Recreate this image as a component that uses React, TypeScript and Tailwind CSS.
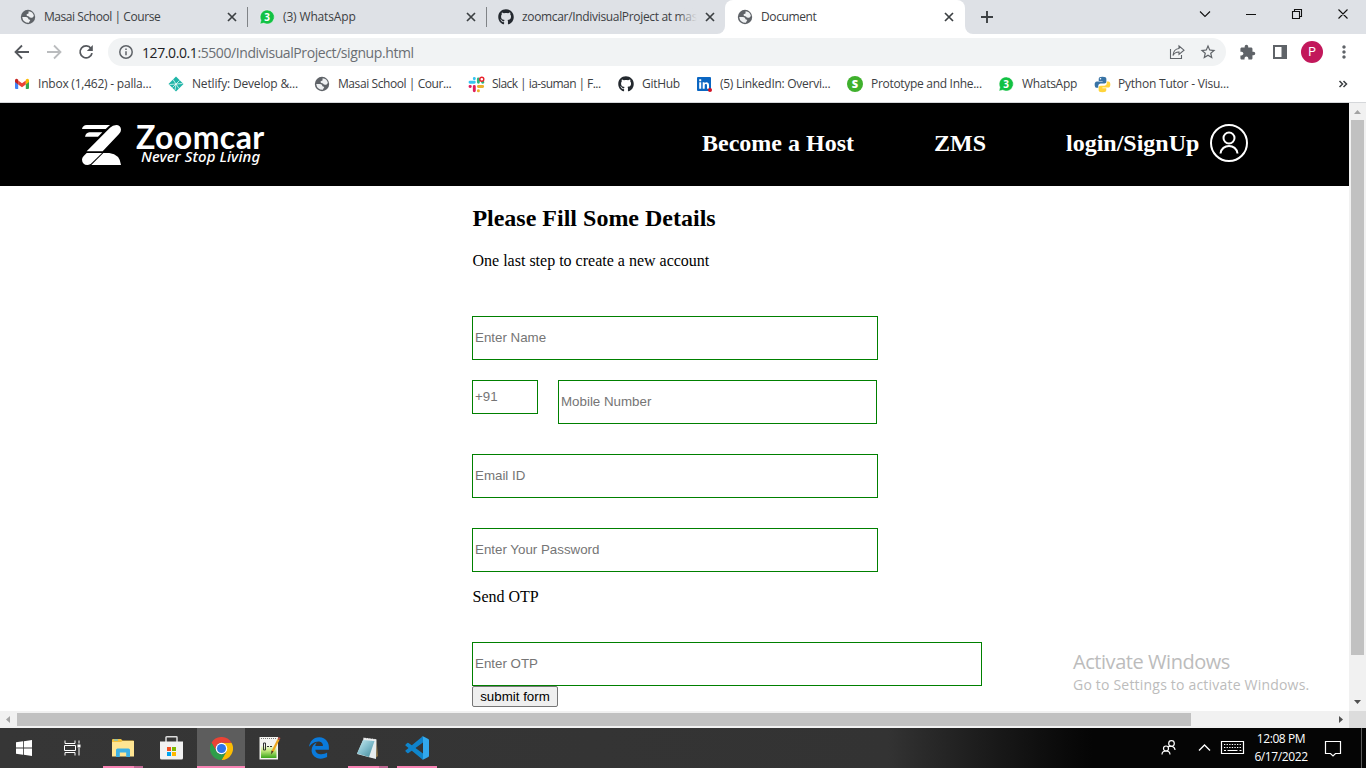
import React from "react";
import { FaGithub } from "react-icons/fa";
import { MdExtension, MdStarBorder, MdMoreVert } from "react-icons/md";

type Kids = { children?: React.ReactNode };

const Globe = () => (
  <svg viewBox="0 0 16 16" className="size-4 shrink-0">
    <circle cx="8" cy="8" r="7.200" fill="#5f6368" />
    <path d="M8.600 2.300q4.300.300 5.300 4.800L12.300 8.700Q9.500 9 9 7.400L6.800 6.800 6.600 5.200 8.500 4.400Z" fill="#eef0f2" />
    <path d="M2.200 8H6.200Q8.500 8.300 8.500 10.200L10.300 11 8.800 13.800Q3 13.800 2.200 8Z" fill="#eef0f2" />
  </svg>
);

const WhatsApp = () => (
  <svg viewBox="0 0 16 16" className="size-4 shrink-0">
    <path d="M8.2 1a7 7 0 1 1-3.4 13.1L1 15l1-3.7A7 7 0 0 1 8.2 1Z" fill="#12c143" stroke="#fff" strokeOpacity=".7" strokeWidth=".6" />
    <text x="8.2" y="11.6" textAnchor="middle" fontSize="10" fontWeight="700" fill="#fff" fontFamily="Open Sans, sans-serif">3</text>
  </svg>
);

const Gmail = () => (
  <svg viewBox="0 0 16 16" className="size-4">
    <path d="M1 4v8q0 1 1 1h2.2V6.5Z" fill="#4285f4" />
    <path d="M15 4v8q0 1-1 1h-2.2V6.5Z" fill="#34a853" />
    <path d="M4.2 4.5v4L8 11.3l3.8-2.8v-4L8 7.3Z" fill="#ea4335" />
    <path d="M1 4.2Q1.3 2 3.3 3l.9.7v4.8L1 6Z" fill="#c5221f" />
    <path d="M15 4.2Q14.7 2 12.7 3l-.9.7v4.8L15 6Z" fill="#fbbc04" />
  </svg>
);

const Netlify = () => (
  <svg viewBox="0 0 16 16" className="size-4">
    <path d="M8 .5 15.5 8 8 15.5.5 8Z" fill="#20b5a8" />
    <path d="m5 3.500 6 9M1.500 8.500l13-1M4.500 11.500l7-7M8 8l-1 6" stroke="#fff" strokeWidth=".7" fill="none" />
  </svg>
);

const Slack = () => (
  <svg viewBox="0 0 17 17" className="size-[17px]" fill="none" strokeWidth="2.9" strokeLinecap="round">
    <path d="M2 6.300h4.300M6.300 2.500v.3" stroke="#36c5f0" />
    <path d="M10.400 3v3.300M14.600 6.300h.3" stroke="#2eb67d" />
    <path d="M10.400 10.500h4.300M10.400 14.600v.3" stroke="#ecb22e" />
    <path d="M6.300 10.500v4.200M2 10.500h.3" stroke="#e01e5a" />
    <circle cx="13.800" cy="3.200" r="2" stroke="#e8202a" strokeWidth="1.400" fill="#fff" />
  </svg>
);

const LinkedIn = () => (
  <svg viewBox="0 0 16 16" className="size-4">
    <rect x="1" y="1" width="14" height="14" rx="1" fill="#0a66c2" />
    <path d="M3.200 6.300h2v6.500h-2Zm0-3h2v2h-2ZM6.700 6.300h1.900v.9c1.300-1.700 4.400-1.200 4.400 1.700v3.900h-2V9.400c0-2-2.300-1.900-2.300 0v3.400h-2Z" fill="#fff" />
    <circle cx="14" cy="14" r="2" fill="#d11124" />
  </svg>
);

const SBadge = () => (
  <svg viewBox="0 0 16 16" className="size-4">
    <circle cx="8" cy="8" r="8" fill="#3fb02d" />
    <text x="8" y="11.800" textAnchor="middle" fontSize="11" fontWeight="800" fill="#fff" fontFamily="Open Sans, sans-serif">S</text>
  </svg>
);

const Python = () => (
  <svg viewBox="0 0 18 18" className="size-[17px]">
    <path d="M9 .8C6 .8 5 1.700 5 3.200v2h4.200v.7H3.100C1.400 5.900.7 7.300.7 9.200s.8 3.300 2.300 3.300h1.500v-2.100c0-1.500 1.200-2.500 2.600-2.500h3.900c1.300 0 2.100-.9 2.100-2.100V3.200C13.100 1.700 12 .8 9 .8Z" fill="#3873a5" />
    <path d="M9 17.300c3 0 4-.9 4-2.400v-2H8.900v-.7h6c1.700 0 2.400-1.400 2.400-3.300s-.8-3.200-2.300-3.200h-1.500v2c0 1.500-1.200 2.500-2.600 2.500H7c-1.300 0-2.100.9-2.100 2.100v2.600c0 1.500 1.100 2.400 4.100 2.400Z" fill="#ffd43b" />
    <circle cx="6.900" cy="2.900" r=".8" fill="#fff" />
  </svg>
);

const Close = () => (
  <svg viewBox="0 0 16 16" className="size-4 shrink-0">
    <path d="m4 4 8 8M12 4l-8 8" stroke="#3c4043" strokeWidth="1.7" />
  </svg>
);

function Tab({ icon, title, faded, divider, tight = "tracking-[-0.22px]" }: { icon: React.ReactNode; title: string; faded?: boolean; divider?: boolean; tight?: string }) {
  return (
    <div className="flex h-[34px] w-[239px] shrink-0 items-center">
      <div className="ml-[11px] flex w-6 shrink-0 items-center">{icon}</div>
      <div className={`relative w-[175px] overflow-hidden whitespace-nowrap text-[12px] text-[#3c4043] ${tight}`}>
        {title}
        {faded && <span className="absolute inset-y-0 right-0 w-5 bg-linear-to-r from-transparent to-[#dee1e6]" />}
      </div>
      <div className="ml-[5px] flex"><Close /></div>
      {divider && <span className="ml-auto h-5 w-px bg-[#808387]" />}
    </div>
  );
}

function TabStrip() {
  return (
    <div className="flex h-[34px] bg-white">
      <div className="flex w-[725px] rounded-br-lg bg-[#dee1e6] pl-[9px]">
        <Tab icon={<Globe />} title="Masai School | Course" divider tight="tracking-[-0.44px]" />
        <Tab icon={<WhatsApp />} title="(3) WhatsApp" divider tight="tracking-[-0.15px]" />
        <Tab icon={<FaGithub className="size-4 text-[#24292f]" />} title="zoomcar/IndivisualProject at mas" faded tight="tracking-[-0.33px]" />
      </div>
      <div className="w-[240px] bg-[#dee1e6]">
        <div className="rounded-t-lg bg-white pl-px">
          <Tab icon={<Globe />} title="Document" tight="tracking-[-0.4px]" />
        </div>
      </div>
      <div className="flex flex-1 rounded-bl-lg bg-[#dee1e6]">
        <svg viewBox="0 0 401 34" className="h-[34px] w-[401px]" fill="none">
          <path d="M16 17h12M22 11v12" stroke="#3c4043" strokeWidth="1.9" />
          <path d="m235 11.500 5 5 5-5M281 14.500h10" stroke="#111" strokeWidth="1.100" />
          <path d="M327.500 11.500h7v7h-7ZM329.500 11.500v-2h7v7h-2M373.500 9.500l9 9M382.500 9.500l-9 9" stroke="#111" strokeWidth="1.100" />
        </svg>
      </div>
    </div>
  );
}

function Toolbar() {
  return (
    <div className="flex h-9 items-center bg-white">
      <svg viewBox="0 0 108 36" className="h-9 w-[108px]" fill="none" strokeWidth="1.800">
        <path d="M29 18H16M22 11.500 15.500 18l6.500 6.500" stroke="#55585d" />
        <path d="M47 18h13M54 11.500l6.500 6.500-6.500 6.500" stroke="#babcbe" />
        <path d="M91 14.400a6 6 0 1 0 1 4.700" stroke="#55585d" />
        <path d="M92.800 11v6h-6Z" fill="#55585d" />
      </svg>
      <div className="flex h-7 w-[1118px] items-center rounded-full bg-[#f1f3f4] pl-[11px] pr-[9px]">
        <svg viewBox="0 0 14 14" className="size-[14px]" fill="none" stroke="#5f6368" strokeWidth="1.500">
          <circle cx="7" cy="7" r="6.200" />
          <path d="M7 6.300v4M7 3.500v1.500" />
        </svg>
        <div className="ml-[9px] text-[14px] tracking-[-0.41px] text-[#6a6e73]">
          <span className="text-[#202124]">127.0.0.1</span>:5500/IndivisualProject/signup.html
        </div>
        <svg viewBox="0 0 16 16" className="ml-auto size-4" fill="none" stroke="#5f6368" strokeWidth="1.100">
          <path d="M1.500 5v9.500h11V11M10 2l5 4.200-5 4.200V8Q6 7.800 4 11.500 4.500 5 10 4.500Z" />
        </svg>
        <MdStarBorder className="ml-[14px] size-[18px] text-[#5f6368]" />
      </div>
      <MdExtension className="ml-[13px] size-[17px] text-[#5f6368]" />
      <svg viewBox="0 0 14 14" className="ml-[17px] size-[14px]">
        <path d="M1 1h12v12H1Z" fill="none" stroke="#5f6368" strokeWidth="2" />
        <path d="M8.500 1H13v12H8.500Z" fill="#5f6368" />
      </svg>
      <div className="ml-[14px] flex size-[22px] items-center justify-center rounded-full bg-[#c2185b] font-['Roboto',sans-serif] text-[12px] text-white">P</div>
      <MdMoreVert className="ml-[11px] size-[20px] text-[#5f6368]" />
    </div>
  );
}

function Bookmark({ icon, w, tight = "tracking-[-0.22px]", children }: Kids & { icon: React.ReactNode; w: string; tight?: string }) {
  return (
    <div className={`flex shrink-0 items-center ${w}`}>
      <span className="flex w-6 shrink-0">{icon}</span>
      <span className={`whitespace-nowrap text-[12px] text-[#3c4043] ${tight}`}>{children}</span>
    </div>
  );
}

function Bookmarks() {
  return (
    <div className="flex h-[33px] border-b border-[#d5d7da] bg-white pb-1 pl-[14px] pr-[18px]">
      <Bookmark w="w-[154px]" icon={<Gmail />}>Inbox (1,462) - palla...</Bookmark>
      <Bookmark w="w-[146px]" icon={<Netlify />} tight="tracking-[-0.17px]">Netlify: Develop &amp;...</Bookmark>
      <Bookmark w="w-[154px]" icon={<Globe />} tight="tracking-[-0.42px]">Masai School | Cour...</Bookmark>
      <Bookmark w="w-[150px]" icon={<Slack />} tight="tracking-[-0.56px]">Slack | ia-suman | F...</Bookmark>
      <Bookmark w="w-[78px]" icon={<FaGithub className="size-4 text-[#24292f]" />} tight="tracking-[-0.3px]">GitHub</Bookmark>
      <Bookmark w="w-[151px]" icon={<LinkedIn />} tight="tracking-[-0.27px]">(5) LinkedIn: Overvi...</Bookmark>
      <Bookmark w="w-[151px]" icon={<SBadge />} tight="tracking-[-0.3px]">Prototype and Inhe...</Bookmark>
      <Bookmark w="w-[96px]" icon={<WhatsApp />} tight="tracking-[-0.3px]">WhatsApp</Bookmark>
      <Bookmark w="w-[150px]" icon={<Python />}>Python Tutor - Visu...</Bookmark>
      <svg viewBox="0 0 10 10" className="ml-auto mt-[9px] size-[10px]" fill="none" stroke="#3c4043" strokeWidth="1.500">
        <path d="m1.500 2 3 3-3 3M5.500 2l3 3-3 3" />
      </svg>
    </div>
  );
}

function Header() {
  return (
    <header className="flex h-[83px] items-center bg-black pl-[82px] text-white">
      <svg viewBox="0 0 117 120" className="h-10 w-[39px]" fill="#fff">
        <path d="M0 12Q2 1 14 0H84L71 12Z" />
        <path d="M9 35Q12 23 22 22H61L48 35Z" />
        <path d="M14 79 84 8Q92 0 103 0a14 14 0 0 1 14 14q0 7-6 13L62 79Z" />
        <path d="M14 84H60L26 117Q20 120 16 120A17 17 0 0 1 0 104Q0 98 5 93Z" />
        <path d="M64 84H82Q114 88 117 120H28Z" />
      </svg>
      <div className="ml-[15px] w-[150px]">
        <div className="h-[25px] whitespace-nowrap font-['Lato',sans-serif] text-[32px] font-bold leading-[25px] tracking-[0.4px]">Zoomcar</div>
        <div className="ml-[5px] h-[17px] whitespace-nowrap font-['Noto_Sans',sans-serif] text-[15px] font-medium italic leading-[15px] tracking-[0.1px]">Never Stop Living</div>
      </div>
      <nav className="mb-[3px] ml-[415px] flex items-center whitespace-nowrap pl-px font-['Liberation_Serif',serif] text-[24px] font-bold leading-7">
        <span className="w-[232px]">Become a Host</span>
        <span className="w-[132px]">ZMS</span>
        <span className="w-[144px]">login/SignUp</span>
        <svg viewBox="0 0 38 38" className="size-[38px]" fill="none" stroke="#fff" strokeWidth="2">
          <circle cx="19" cy="19" r="18" />
          <circle cx="19" cy="14" r="5.500" />
          <path d="M10.500 29.500c1-10 16-10 17 0" />
        </svg>
      </nav>
    </header>
  );
}

const field = "block border border-[#008000] bg-white px-[2px] pb-[2px] font-['Liberation_Sans',sans-serif] text-[13.333px] placeholder:text-[#757575] outline-none";

function SignupForm() {
  return (
    <form className="ml-[472px] h-[525px] font-['Liberation_Serif',serif] text-black">
      <h2 className="pl-[0.4px] pt-[18px] text-[24px] font-bold leading-7">Please Fill Some Details</h2>
      <p className="mt-5 pl-[0.5px] text-[16px] leading-[18px]">One last step to create a new account</p>
      <input className={`${field} mt-[46px] h-11 w-[406px]`} placeholder="Enter Name" />
      <div className="mt-5 flex items-start gap-5">
        <input className={`${field} h-[34px] w-[66px]`} placeholder="+91" />
        <input className={`${field} h-11 w-[319px]`} placeholder="Mobile Number" />
      </div>
      <input className={`${field} mt-[30px] h-11 w-[406px]`} placeholder="Email ID" />
      <input className={`${field} mt-[30px] h-11 w-[406px]`} placeholder="Enter Your Password" />
      <p className="mt-4 pl-[0.5px] text-[16px] leading-[18px]">Send OTP</p>
      <input className={`${field} mt-9 h-11 w-[510px]`} placeholder="Enter OTP" />
      <button type="button" className="block h-[21px] w-[86px] rounded-[2px] border border-[#767676] bg-[#efefef] font-['Liberation_Sans',sans-serif] text-[13.333px] leading-[15px]">submit form</button>
    </form>
  );
}

function VerticalScrollbar() {
  return (
    <div className="flex w-[17px] flex-col items-center bg-[#f1f1f1]">
      <svg viewBox="0 0 17 17" className="size-[17px]"><path d="m5 11 3.500-4 3.500 4Z" fill="#a3a3a3" /></svg>
      <div className="h-[535px] w-[13px] bg-[#c1c1c1]" />
      <svg viewBox="0 0 17 17" className="mt-auto size-[17px]"><path d="m5 6 3.500 4L12 6Z" fill="#505050" /></svg>
    </div>
  );
}

function HorizontalScrollbar() {
  return (
    <div className="flex h-[17px] items-center bg-[#f1f1f1]">
      <svg viewBox="0 0 17 17" className="size-[17px]"><path d="M10 5 6 8.500l4 3.500Z" fill="#a3a3a3" /></svg>
      <div className="h-[13px] w-[1174px] bg-[#c1c1c1]" />
      <svg viewBox="0 0 17 17" className="ml-auto size-[17px]"><path d="m7 5 4 3.500L7 12Z" fill="#505050" /></svg>
      <div className="h-[17px] w-[17px] bg-[#dcdcdc]" />
    </div>
  );
}

function TaskItem({ children, active, line, stacked }: Kids & { active?: boolean; line?: string; stacked?: boolean }) {
  return (
    <div className={`flex h-10 shrink-0 flex-col items-center ${active ? "w-12 bg-[#5d5d5d]" : "w-[49px]"}`}>
      <div className="flex h-[38px] items-center pt-0.5">{children}</div>
      <div className="flex h-0.5 w-full justify-center">
        {line && <span className={`h-0.5 bg-[#f883b4] ${line}`} />}
        {stacked && <span className="h-0.5 w-[9px] bg-[#bd6690]" />}
      </div>
    </div>
  );
}

const StartLogo = () => (
  <svg viewBox="0 0 16 16" className="size-4" fill="#fff">
    <path d="M0 2.300 7 1.300V7.600H0ZM7.800 1.200 16 0V7.600H7.800ZM0 8.400H7V14.700L0 13.700ZM7.800 8.400H16V16L7.800 14.800Z" />
  </svg>
);

const TaskView = () => (
  <svg viewBox="0 0 17 16" className="h-4 w-[17px]" fill="none" stroke="#fff">
    <path d="M1 .500v3h10v-3M1 15.500v-3h10v3M.500 5.500h11v5H.500Z" />
    <path d="M15 .500v3M15 8v7.500" />
    <path d="M13.500 4.500h3v3h-3Z" fill="#fff" stroke="none" />
  </svg>
);

const Explorer = () => (
  <svg viewBox="0 0 22 18" className="h-[18px] w-[22px]">
    <path d="M0 1q0-1 1-1h8l1.500 1.500H21q1 0 1 1V17H0Z" fill="#f3c23f" />
    <path d="M0 3h9l1.500-1H22v15.500H0Z" fill="#ffe592" />
    <path d="M4 18V11q0-1.500 1.500-1.500h11Q18 9.500 18 11v7h-3.800v-4.500H7.800V18Z" fill="#3db1e5" />
    <path d="M2 1h4" stroke="#4fc3f7" />
  </svg>
);

const Store = () => (
  <svg viewBox="0 0 23 24" className="h-6 w-[23px]">
    <path d="M6 6V1.500q0-.700.700-.700h9.600q.700 0 .700.700V6" fill="none" stroke="#dcdcdc" strokeWidth="1.500" />
    <path d="M0 5.500h23V22q0 1.500-1.500 1.500h-20Q0 23.500 0 22Z" fill="#f2f2f2" />
    <path d="M7 11h4v4H7Z" fill="#f25022" /><path d="M12 11h4v4h-4Z" fill="#7fba00" />
    <path d="M7 16h4v4H7Z" fill="#00a4ef" /><path d="M12 16h4v4h-4Z" fill="#ffb900" />
  </svg>
);

const Chrome = () => (
  <svg viewBox="0 0 48 48" className="size-[23px]">
    <path d="M24 12H44.800A24 24 0 0 1 24 48L34.400 30Z" fill="#fbbc04" />
    <path d="M3.200 12A24 24 0 0 1 44.800 12H24A12 12 0 0 0 13.600 30Z" fill="#ea4335" />
    <path d="M3.200 12A24 24 0 0 0 24 48L34.400 30A12 12 0 0 1 13.600 30Z" fill="#2e9e4a" />
    <circle cx="24" cy="24" r="12" fill="#fff" />
    <circle cx="24" cy="24" r="9.500" fill="#2f75ea" />
  </svg>
);

const NotepadPlus = () => (
  <svg viewBox="0 0 22 24" className="h-6 w-[22px]">
    <defs><linearGradient id="npp" x1="0" y1="0" x2="0" y2="1"><stop offset="0" stopColor="#f6fbe8" /><stop offset=".4" stopColor="#c5ea80" /><stop offset="1" stopColor="#3ba51a" /></linearGradient></defs>
    <path d="M.500 1H19v22.500H.500Z" fill="#f4f4f0" />
    <path d="M2 9.500h15.500V22H2Z" fill="url(#npp)" />
    <path d="M2 2.500h15" stroke="#777" strokeDasharray="1 1" />
    <path d="M4.500 7h2v7h-2ZM8 10.500h2M11 10.500h2" stroke="#333" fill="none" />
    <path d="m19.500 3.500-6 12" stroke="#efa61c" strokeWidth="2.200" />
    <path d="m20.500 1.500-1 2" stroke="#b95345" strokeWidth="2.200" />
    <path d="m12.500 14.500-.500 4 2.500-3Z" fill="#48351c" />
  </svg>
);

const Edge = () => (
  <svg viewBox="0 0 512 512" className="size-[22px]" fill="#0a7adb">
    <path d="M486.290 243.670c0-44-7.760-84.460-28.810-122.400C416.500 47.880 343.910 8 258.890 8 119 7.720 40.620 113.210 26.060 227.680c42.420-61.310 117.070-121.380 220.370-125 0 0 109.670 0 99.420 105H170c6.370-37.390 18.550-59 34.340-78.930-75.050 34.900-121.850 96.100-120.750 188.320.830 71.450 50.130 144.840 120.750 172 83.350 31.840 192.770 7.200 240.130-21.330V363.310C363.600 419.800 173.600 424.230 172.210 295.740H486.290Z" />
  </svg>
);

const Notepad = () => (
  <svg viewBox="0 0 24 23" className="h-[23px] w-6">
    <defs><linearGradient id="pad" x1="0" y1="0" x2="1" y2="1"><stop offset="0" stopColor="#c9edf2" /><stop offset=".5" stopColor="#80bccb" /><stop offset="1" stopColor="#3e8796" /></linearGradient></defs>
    <path d="m20.500 3 1.500 16-2 1.500Z" fill="#8b7141" />
    <path d="m1 17 13 3.500 6 1.500 .500-19.500L8 1Z" fill="#e6eced" />
    <path d="M7 3 18.500 4 13 20 1 16.500Z" fill="url(#pad)" />
    <path d="m7.500 1.500 12.500 1.500" stroke="#f2f2f2" strokeWidth="1.800" strokeDasharray="1 .700" />
  </svg>
);

const VSCode = () => (
  <svg viewBox="0 0 100 100" className="size-6">
    <path d="M2 36 9 29q3-2 6 0L75 73V98q-3 0-6-3L2 40q-2-2 0-4Z" fill="#0f86cc" />
    <path d="M2 64l7 7q3 2 6 0L75 27V2q-3 0-6 3L2 60q-2 2 0 4Z" fill="#0f82cb" />
    <path d="M69 97q4 2 8 1L97 88q3-2 3-6V18q0-4-3-6L77 2q-4-1-8 1 6-2 6 5V92q0 7-6 5Z" fill="#32a9ee" />
  </svg>
);

function Taskbar() {
  return (
    <div className="flex h-10 items-center bg-linear-to-r from-[#363636] from-0% via-[#333333] via-65% to-[#050505] to-80% text-white">
      <div className="flex h-10 w-12 items-center justify-center"><StartLogo /></div>
      <div className="flex h-10 w-[50px] items-center justify-center pr-[2px]"><TaskView /></div>
      <TaskItem line="ml-px w-[31px]" stacked><Explorer /></TaskItem>
      <TaskItem><Store /></TaskItem>
      <span className="w-px" />
      <TaskItem active line="w-full"><Chrome /></TaskItem>
      <TaskItem><NotepadPlus /></TaskItem>
      <TaskItem><Edge /></TaskItem>
      <TaskItem line="w-[31px]" stacked><Notepad /></TaskItem>
      <TaskItem line="w-10"><VSCode /></TaskItem>
      <svg viewBox="0 0 90 40" className="ml-auto h-10 w-[90px]" fill="none" stroke="#fff" strokeWidth="1.200">
        <circle cx="11.500" cy="15.500" r="2.800" /><circle cx="6" cy="20.500" r="2.500" />
        <path d="M2 26.500q0-3.500 4-3.500t4 3.500M8 19q3-2 6 .500 1 1.200 1 2.500" />
        <path d="m39 22.500 5.500-5.500 5.500 5.500" strokeWidth="1.400" />
        <path d="M61.500 13.500h22v12h-22Z" />
        <path d="M64 16.500h18M64 19.500h18" strokeDasharray="1.300 1.300" />
        <path d="M64 22.500h2M67.500 22.500h10M79.500 22.500h2" />
      </svg>
      <div className="-ml-[6px] w-[74px] pb-px text-center text-[12px] leading-[18px] tracking-[-0.4px]">
        <div>12:08 PM</div>
        <div>6/17/2022</div>
      </div>
      <svg viewBox="0 0 18 18" className="ml-[6px] size-[18px]" fill="none" stroke="#fff" strokeWidth="1.200">
        <path d="M1.500 2.500h15v12h-5L9 17l-2.500-2.500h-5Z" />
      </svg>
      <span className="ml-[19px] mr-1 h-10 w-px bg-[#5a5a5a]" />
    </div>
  );
}

export default function App() {
  return (
    <div className="relative h-[768px] w-[1366px] overflow-hidden bg-white font-['Open_Sans','Noto_Sans',sans-serif]">
      <TabStrip />
      <Toolbar />
      <Bookmarks />
      <div className="flex h-[608px]">
        <main className="w-[1349px]">
          <Header />
          <SignupForm />
        </main>
        <VerticalScrollbar />
      </div>
      <HorizontalScrollbar />
      <Taskbar />
      <div className="pointer-events-none absolute left-[1073px] top-[650px] whitespace-nowrap text-[#bcbcbc]">
        <div className="text-[20px] leading-6 tracking-[-0.45px]">Activate Windows</div>
        <div className="text-[14px] leading-[22px] tracking-[0.2px]">Go to Settings to activate Windows.</div>
      </div>
    </div>
  );
}
